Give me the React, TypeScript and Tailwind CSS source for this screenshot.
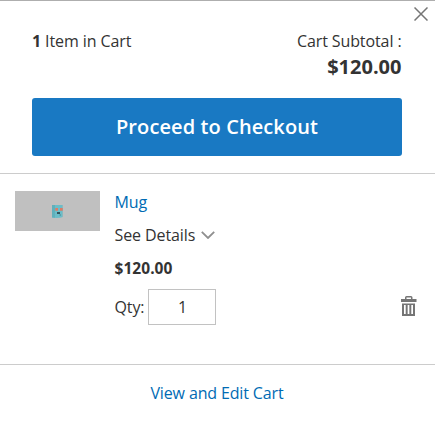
import { useState } from "react";

interface CartItem {
  name: string;
  price: string;
  qty: number;
}

const item: CartItem = { name: "Mug", price: "$120.00", qty: 1 };

function CloseIcon() {
  return (
    <svg width="14" height="14" viewBox="0 0 14 14" fill="none" stroke="#757575" strokeWidth="1.5">
      <path d="M0.5 0.5l13 13M13.5 0.5L0.5 13.5" />
    </svg>
  );
}

function ChevronIcon() {
  return (
    <svg width="14" height="8" viewBox="0 0 14 8" fill="none" stroke="#8f8f8f" strokeWidth="1.8">
      <path d="M0.8 0.8L7 7l6.2-6.2" />
    </svg>
  );
}

function TrashIcon() {
  return (
    <svg width="16" height="20" viewBox="0 0 16 20" fill="#757575">
      <path d="M4 3V1.500Q4 0 5.500 0h4.500Q11.500 0 11.500 1.500V3H15.500v3H0V3zM5.500 3H10V1.500H5.500z" fillRule="evenodd" />
      <path d="M1 7.500h13V20H1zM3 9v9h1.700V9zM6.650 9v9h1.700V9zM10.300 9v9H12V9z" fillRule="evenodd" />
    </svg>
  );
}

function MugImage() {
  return (
    <svg width="85" height="40" viewBox="0 0 85 40">
      <rect width="85" height="40" fill="#c0c0c0" />
      <path d="M37 14h11v12q-5 1.500-11 .5z" fill="#6bbdc8" />
      <path d="M37 14h3v12.800l-3-.3z" fill="#5fb0bb" />
      <path d="M47 14h1v12h-1z" fill="#8bb9be" />
      <path d="M40.300 17H43v2.700h-2.700zM45 17h2.700v2.700H45z" fill="#df7a63" />
      <path d="M42 21h3v2h-3z" fill="#33565e" />
      <path d="M44.500 23.500H46v1h-1.500z" fill="#4c858e" />
    </svg>
  );
}

export default function App() {
  const [qty, setQty] = useState(String(item.qty));

  return (
    <div className="h-[448px] w-[435px] border-t border-[#aeaeae] bg-white font-['Open_Sans',sans-serif] text-base leading-[22px] tracking-[-0.1px] text-[#333]">
      <div className="flex h-[27px] justify-end pt-[6px] pr-[7px]">
        <button aria-label="Close" className="h-[14px]">
          <CloseIcon />
        </button>
      </div>
      <div className="flex justify-between pt-[2px] pr-[33.5px] pl-8">
        <div><b>{item.qty}</b> Item in Cart</div>
        <div className="text-right">
          <div>Cart Subtotal :</div>
          <div className="pt-px text-xl leading-7 font-bold tracking-normal">{item.price}</div>
        </div>
      </div>
      <div className="pt-[17px] pr-[33px] pl-8">
        <button className="h-[58px] w-full rounded-[3px] bg-[#1979c3] text-xl font-semibold tracking-[0.1px] text-white">
          Proceed to Checkout
        </button>
      </div>
      <div className="mt-[17px] flex h-[192px] border-y border-[#ccc] pt-[17px] pr-[18px] pl-[15px]">
        <MugImage />
        <div className="ml-[14.5px] flex-1">
          <div className="text-[#006bb4]">{item.name}</div>
          <div className="mt-[11px] flex items-center gap-[6px]">
            See Details
            <ChevronIcon />
          </div>
          <div className="mt-[11px] text-[15.5px] font-bold tracking-[0.05px]">{item.price}</div>
          <div className="mt-[10px] flex items-center">
            <label>Qty:</label>
            <input
              value={qty}
              onChange={(e) => setQty(e.target.value)}
              className="ml-1 h-9 w-[68px] border border-[#c2c2c2] text-center"
            />
            <button aria-label="Remove item" className="mb-[2px] ml-auto">
              <TrashIcon />
            </button>
          </div>
        </div>
      </div>
      <div className="pt-[17px] pr-px text-center tracking-[-0.14px]">
        <a href="#" className="text-[#006bb4]">View and Edit Cart</a>
      </div>
    </div>
  );
}
